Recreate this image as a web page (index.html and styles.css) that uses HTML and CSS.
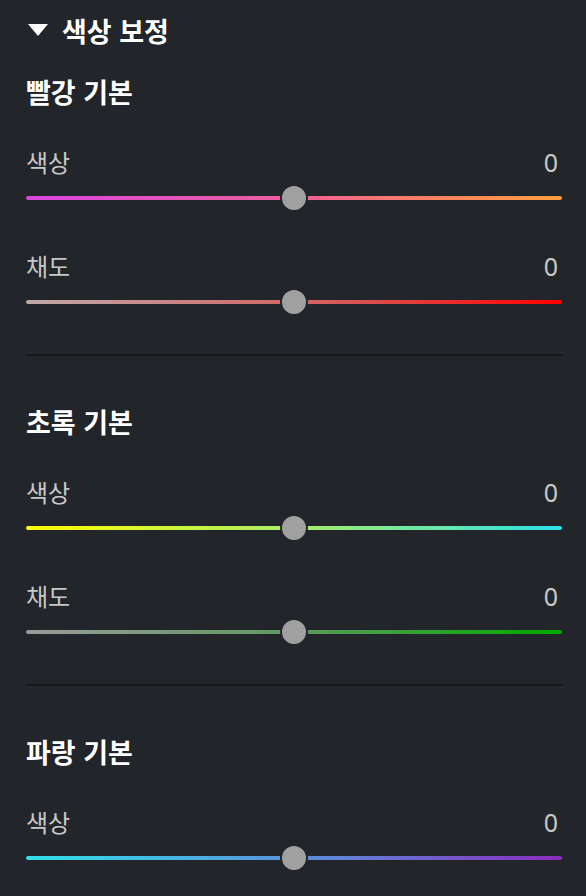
FILE: index.html
```html
<!DOCTYPE html>
<html lang="ko">
<head>
    <meta charset="UTF-8">
    <meta name="viewport" content="width=device-width, initial-scale=1.0">
    <title>색상 보정</title>
    <link rel="stylesheet" href="styles.css">
</head>
<body>
    <div class="panel">
        <div class="panel-header">
            <svg class="caret" width="20" height="12" viewBox="0 0 20 12"><path d="M0 0H20L10 12Z" fill="#fff"/></svg>
            <span>색상 보정</span>
        </div>

        <section class="group">
            <h2 class="group-title">빨강 기본</h2>
            <div class="field">
                <div class="field-row"><span>색상</span><span class="value">0</span></div>
                <input type="range" class="slider red-hue" min="-100" max="100" value="0">
            </div>
            <div class="field">
                <div class="field-row"><span>채도</span><span class="value">0</span></div>
                <input type="range" class="slider red-sat" min="-100" max="100" value="0">
            </div>
        </section>

        <section class="group">
            <h2 class="group-title">초록 기본</h2>
            <div class="field">
                <div class="field-row"><span>색상</span><span class="value">0</span></div>
                <input type="range" class="slider green-hue" min="-100" max="100" value="0">
            </div>
            <div class="field">
                <div class="field-row"><span>채도</span><span class="value">0</span></div>
                <input type="range" class="slider green-sat" min="-100" max="100" value="0">
            </div>
        </section>

        <section class="group last">
            <h2 class="group-title">파랑 기본</h2>
            <div class="field">
                <div class="field-row"><span>색상</span><span class="value">0</span></div>
                <input type="range" class="slider blue-hue" min="-100" max="100" value="0">
            </div>
        </section>
    </div>
</body>
</html>
```

FILE: styles.css
```css
* {
    margin: 0;
    padding: 0;
    box-sizing: border-box;
}
body {
    background-color: #222529;
    font-family: "Noto Sans CJK KR", "Noto Sans", sans-serif;
    color: #fff;
    overflow: hidden;
}
.panel {
    padding: 0 24px 0 26px;
}
.panel-header {
    display: flex;
    align-items: center;
    height: 60px;
    padding-left: 2px;
    font-size: 27px;
    font-weight: 700;
}
.caret {
    margin-right: 14px;
}
.group {
    padding-bottom: 38px;
    border-bottom: 2px solid #16181a;
    margin-bottom: 34px;
}
.group.last {
    border-bottom: none;
}
.group-title {
    font-size: 27px;
    font-weight: 700;
    line-height: 64px;
}
.field {
    margin-top: 20px;
}
.field + .field {
    margin-top: 36px;
}
.field-row {
    display: flex;
    justify-content: space-between;
    line-height: 36px;
    font-size: 24px;
    color: #c8c8c8;
    padding-right: 4px;
}
.value {
    font-family: "Noto Sans", sans-serif;
    font-size: 25px;
}
.slider {
    -webkit-appearance: none;
    appearance: none;
    display: block;
    width: 100%;
    height: 28px;
    margin-top: 4px;
    background: transparent;
    outline: none;
}
.slider::-webkit-slider-runnable-track {
    height: 4px;
    border-radius: 2px;
    background: var(--track);
}
.slider::-webkit-slider-thumb {
    -webkit-appearance: none;
    box-sizing: border-box;
    width: 28px;
    height: 28px;
    margin-top: -12px;
    border-radius: 50%;
    background: #a0a0a0;
    border: 2px solid #222529;
}
.red-hue {
    --track: linear-gradient(90deg, #db46e2, #ef5f9a 50%, #fb7a6c 70%, #ff9e3a);
}
.red-sat {
    --track: linear-gradient(90deg, #bfa9a9, #d46060 55%, #ff0000);
}
.green-hue {
    --track: linear-gradient(90deg, #ffff00, #a8ee6a 50%, #2ee0e6);
}
.green-sat {
    --track: linear-gradient(90deg, #9a9a9a, #5c9a5c 50%, #00aa00);
}
.blue-hue {
    --track: linear-gradient(90deg, #30e0e8, #5b92de 50%, #8a2cc0);
}
```
